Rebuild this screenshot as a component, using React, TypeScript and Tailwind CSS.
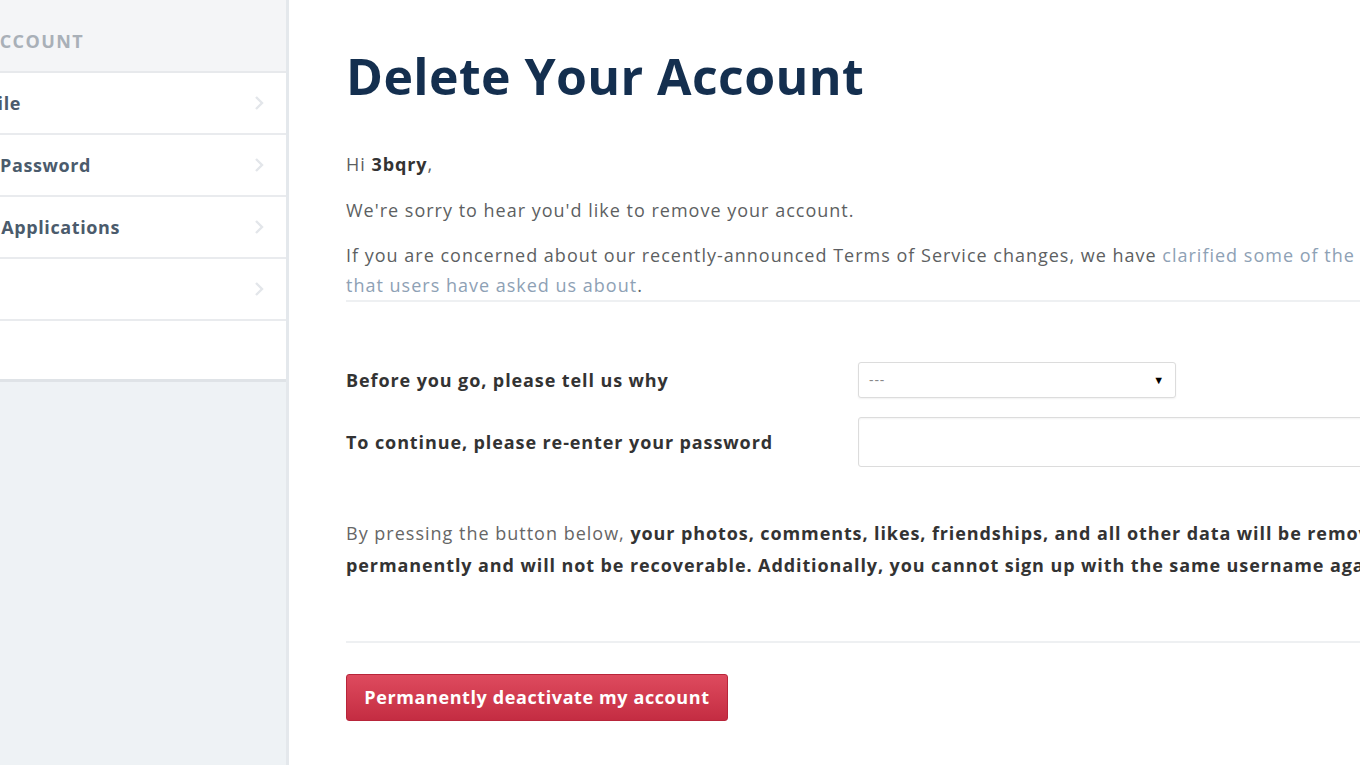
const navItems = [
  { label: "Edit Profile", end: "w-[21px]" },
  { label: "Change Password", end: "w-[91px]" },
  { label: "Manage Applications", end: "w-[120px]" },
  { label: "Email Settings", end: "w-0" },
];

const Chevron = () => (
  <svg width="10" height="16" viewBox="0 0 10 16" className="shrink-0">
    <path d="M2 2l6 6-6 6" fill="none" stroke="#e3e6ea" strokeWidth="2.4" />
  </svg>
);

export default function App() {
  return (
    <div className="flex h-[765px] w-[1360px] overflow-hidden bg-white font-['Open_Sans',sans-serif] text-[18px] tracking-[1px]">
      {/* sidebar */}
      <aside className="flex w-[289px] shrink-0 flex-col overflow-hidden border-r-[3px] border-[#e4e8ec] bg-[#eef2f5] tracking-[0.6px]">
        <div className="flex h-[73px] items-center border-b-2 border-[#e7e9ec] bg-[#f4f5f7] pt-[12px]">
          <div className="flex w-[84px] justify-end">
            <span className="shrink-0 whitespace-nowrap font-bold uppercase tracking-[1.4px] text-[#a9b0b8]">
              Account
            </span>
          </div>
        </div>
        {navItems.map((item) => (
          <div
            key={item.label}
            className="flex h-[62px] items-center justify-between border-b-2 border-[#e9ebee] bg-white pr-[22px]"
          >
            <div className={`${item.end} flex justify-end`}>
              <span className="shrink-0 whitespace-nowrap font-bold text-[#4b5b6c]">{item.label}</span>
            </div>
            <Chevron />
          </div>
        ))}
        <div className="h-[61px] border-b-[3px] border-[#dfe3e7] bg-white" />
      </aside>

      {/* main */}
      <main className="w-[1150px] shrink-0 pl-[57px] pt-[46px]">
        <h1 className="text-[50px] font-bold leading-[60px] tracking-[0.4px] text-[#142f4f]">Delete Your Account</h1>

        <div className="mt-[43px] leading-[30px] text-[#5d5f62]">
          <p>
            Hi <b className="tracking-[0.9px] text-[#333]">3bqry</b>,
          </p>
          <p className="mt-[16px]">We're sorry to hear you'd like to remove your account.</p>
          <p className="mt-[15px] whitespace-nowrap">
            If you are concerned about our recently-announced Terms of Service changes, we have{" "}
            <a className="text-[#8ea1b5]">clarified some of the terms</a>
            <br />
            <a className="text-[#8ea1b5]">that users have asked us about</a>.
          </p>
        </div>
        <div className="h-[2px] bg-[#eef0f2]" />

        <div className="mt-[60px] flex flex-col gap-[19px] tracking-[0.9px]">
          <div className="flex items-center">
            <label className="w-[512px] shrink-0 font-bold text-[#333]">Before you go, please tell us why</label>
            <div className="flex h-[36px] w-[318px] items-center justify-between rounded-[3px] border border-[#dcdcdc] bg-white px-[10px] shadow-[0_1px_2px_rgba(0,0,0,0.06)]">
              <span className="text-[14px] leading-none text-[#888]">---</span>
              <span className="text-[11px] text-black">▼</span>
            </div>
          </div>
          <div className="flex items-center">
            <label className="w-[512px] shrink-0 font-bold text-[#333]">To continue, please re-enter your password</label>
            <input
              type="password"
              className="h-[50px] w-[560px] rounded-[3px] border border-[#dcdcdc] bg-white shadow-[inset_0_1px_2px_rgba(0,0,0,0.05)]"
            />
          </div>
        </div>

        <p className="mt-[50px] whitespace-nowrap leading-[32px] text-[#666]">
          By pressing the button below,{" "}
          <b className="tracking-[0.9px] text-[#333]">
            your photos, comments, likes, friendships, and all other data will be removed
          </b>
          <br />
          <b className="tracking-[0.9px] text-[#333]">
            permanently and will not be recoverable. Additionally, you cannot sign up with the same username again.
          </b>
        </p>

        <div className="mt-[60px] h-[2px] bg-[#eef0f2]" />

        <button className="mt-[31px] h-[47px] w-[382px] rounded-[3px] border border-[#b8253a] bg-gradient-to-b from-[#de4a5e] to-[#c42c42] font-bold tracking-[0.6px] text-white">
          Permanently deactivate my account
        </button>
      </main>
    </div>
  );
}
